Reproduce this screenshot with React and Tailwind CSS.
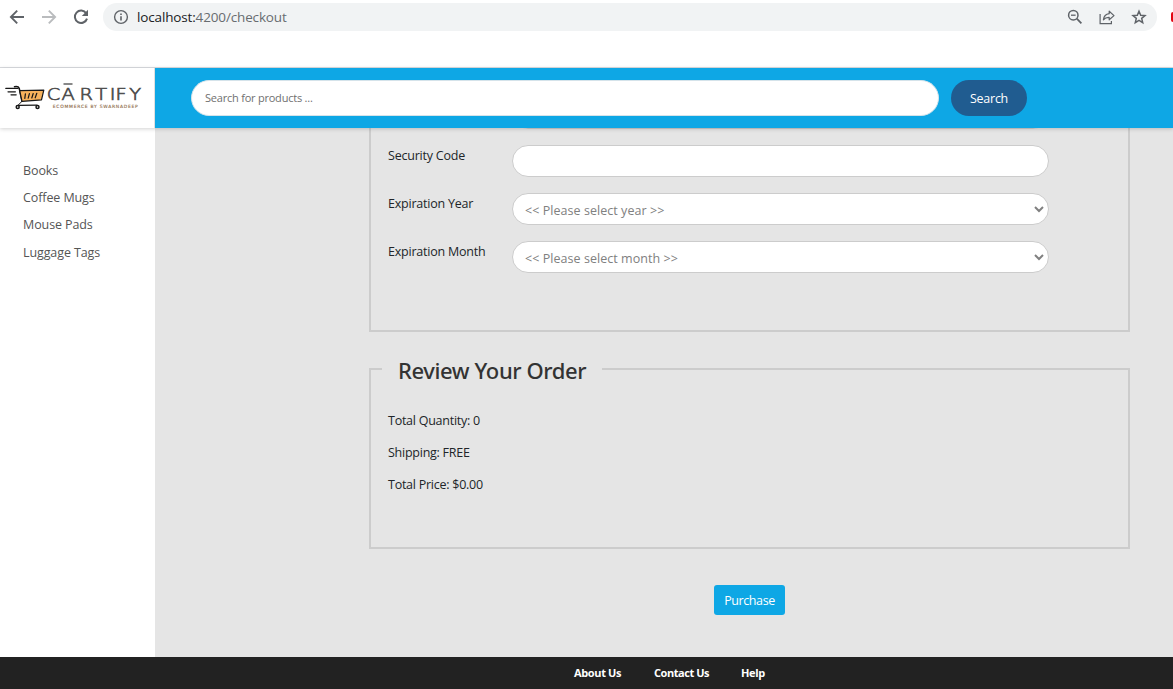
import React from 'react';

const categories = ['Books', 'Coffee Mugs', 'Mouse Pads', 'Luggage Tags'];

function BackIcon({ className }) {
  return (
    <svg className={className} width="16" height="16" viewBox="0 0 16 16" fill="none" stroke="currentColor" strokeWidth="1.9">
      <path d="M15 8H2.2M8.2 1.7 1.9 8l6.3 6.3" />
    </svg>
  );
}

function BrowserBar() {
  return (
    <div className="h-[68px] border-b border-[#dadce0] bg-white">
      <div className="flex h-[34px] items-center">
        <BackIcon className="ml-[9px] text-[#5f6368]" />
        <BackIcon className="ml-4 rotate-180 text-[#babcbe]" />
        <svg className="ml-4" width="16" height="16" viewBox="0 0 16 16" fill="none" stroke="#5f6368" strokeWidth="2">
          <path d="M13.2 4.3A6.2 6.2 0 1 0 14 9.6" />
          <path d="M15 0.8V7H8.8Z" fill="#5f6368" stroke="none" />
        </svg>
        <div className="ml-[14px] flex h-7 w-[1054px] items-center rounded-full bg-[#f1f3f4]">
          <svg className="ml-[10px]" width="16" height="16" viewBox="0 0 16 16" fill="none" stroke="#5f6368">
            <circle cx="8" cy="8" r="6.4" strokeWidth="1.4" />
            <path d="M8 7.2v4.2M8 4.4v1.6" strokeWidth="1.6" />
          </svg>
          <span className="ml-2 text-[13.5px] tracking-[-0.15px] whitespace-nowrap text-[#202124]">
            localhost:<span className="text-[#686c70]">4200/checkout</span>
          </span>
          <div className="mr-[10px] ml-auto flex items-center gap-4">
            <svg width="16" height="16" viewBox="0 0 16 16" fill="none" stroke="#5f6368" strokeWidth="1.5">
              <circle cx="6.3" cy="6.2" r="4.7" />
              <path d="M9.8 9.7 14.4 14.3" strokeWidth="1.8" />
              <path d="M4 6.2h4.6" strokeWidth="1.3" />
            </svg>
            <svg width="16" height="16" viewBox="0 0 16 16" fill="none" stroke="#5f6368" strokeWidth="1.2">
              <path d="M1.1 5V14.6H12.4V12" />
              <path d="M10.2 2.2 15 6.6 10.2 10.8V8.4C7.4 8.3 5.8 9 4.4 10.8 4.8 7.5 6.7 5.2 10.2 4.7Z" strokeLinejoin="round" />
            </svg>
            <svg width="16" height="16" viewBox="0 0 16 16" fill="none" stroke="#5f6368" strokeWidth="1.5">
              <path d="M8 2.2 9.7 6.2 14 6.6 10.7 9.4 11.7 13.7 8 11.4 4.3 13.7 5.3 9.4 2 6.6 6.3 6.2Z" />
            </svg>
          </div>
        </div>
        <div className="ml-auto h-[10px] w-[2px] rounded-l-[2px] bg-[#e30613]" />
      </div>
    </div>
  );
}

function Logo() {
  return (
    <svg width="154" height="60" viewBox="0 68 154 60" fill="none">
      <g stroke="#171717" strokeLinecap="round">
        <path d="M5.8 88.4H18M8 91.8H15.4M11 94.8H16.2" strokeWidth="1.2" />
        <path d="M14.5 86.7C17 86.2 18.6 86.6 19.2 88.3L22 101.3" strokeWidth="1.5" />
        <path d="M19.7 90.6 43.8 90.1 41.5 99.9 22 101.3Z" fill="#f7b25c" strokeWidth="1.2" strokeLinejoin="round" />
        <path d="M25.4 93.8 24.8 98.4M29.4 93.6 28.2 98.2M33.2 93.5 31.8 98M36.8 93.3 35.2 97.8" strokeWidth="1.2" />
        <path d="M22 101.3 18.5 104.8" strokeWidth="1" />
        <circle cx="17.7" cy="107" r="1.5" strokeWidth="1.5" />
        <circle cx="37.5" cy="106.9" r="1.5" strokeWidth="1.5" />
        <path d="M18.5 105.4 37 105.2" strokeWidth="1.2" />
      </g>
      <path d="M63.5 84H72.5" stroke="#555" strokeWidth="1.4" />
      <text transform="scale(1.18 1)" x="39.7 52.2 67.4 80.7 93 97.9 109.5" y="99.8" fontSize="16.4" fontFamily="DejaVu Sans" fontWeight="200" fill="#505050" stroke="#505050" strokeWidth="0.7">CARTIFY</text>
      <text x="52.8" y="108" fontSize="4.5" fontFamily="DejaVu Sans" fontWeight="400" textLength="85" fill="#8d6a48" stroke="#8d6a48" strokeWidth="0.1">ECOMMERCE BY SWARNADEEP</text>
    </svg>
  );
}

function Header() {
  return (
    <header className="relative z-10 flex h-[60px] bg-[#0ea7e5] shadow-[0_1px_4px_rgba(0,0,0,0.18)]">
      <div className="w-[155px] border-r border-[#e0e0e0] bg-white">
        <Logo />
      </div>
      <div className="flex items-center pl-9">
        <div className="flex h-9 w-[748px] items-center rounded-full border border-[#d5e3ea] bg-white pl-[13px]">
          <span className="text-[11px] tracking-[-0.22px] text-[#707070]">Search for products ...</span>
        </div>
        <button className="ml-3 h-9 w-[76px] rounded-full bg-[#205c90] pt-[2px] text-[12.5px] tracking-[-0.25px] text-white">Search</button>
      </div>
    </header>
  );
}

function Label({ children }) {
  return <label className="w-[124px] pt-px text-[12.5px] leading-5 tracking-[-0.22px] whitespace-nowrap text-[#212529]">{children}</label>;
}

function Field({ label, option }) {
  return (
    <div className="mb-4 flex h-8">
      <Label>{label}</Label>
      <div className="flex h-8 w-[537px] items-center rounded-full border border-[#ccc] bg-white pr-1 pl-3">
        {option && (
          <>
            <span className="pt-[4px] text-[12.5px] tracking-[0.05px] text-[#808080]">{option}</span>
            <svg className="ml-auto" width="10" height="8" viewBox="0 0 10 8" fill="none" stroke="#808080" strokeWidth="2">
              <path d="M1 2 5 6 9 2" />
            </svg>
          </>
        )}
      </div>
    </div>
  );
}

export default function App() {
  return (
    <div className="flex h-[689px] w-full flex-col overflow-hidden bg-white font-['Open_Sans',sans-serif]">
      <BrowserBar />
      <Header />
      <div className="flex h-[529px]">
        <aside className="w-[155px] bg-white pt-[29px] pl-[23px]">
          <nav className="flex flex-col text-[12.5px] leading-[27.2px] tracking-[-0.1px] text-[#555]">
            {categories.map((name) => <a key={name}>{name}</a>)}
          </nav>
        </aside>
        <main className="flex-1 overflow-hidden bg-[#e5e5e5] pl-[214px]">
          <form className="w-[761px]">
            <section className="-mt-[31px] h-[235px] border-x-2 border-b-2 border-[#ccc] pl-[17px]">
              <Field label="" />
              <Field label="Security Code" />
              <Field label="Expiration Year" option="<< Please select year >>" />
              <Field label="Expiration Month" option="<< Please select month >>" />
            </section>
            <fieldset className="mt-[21px] h-[196px] border-2 border-[#ccc] pl-[11px]">
              <legend className="h-[32px] w-[220px] pl-4 font-['Noto_Sans',sans-serif] text-[22px] leading-[35px] font-medium tracking-[-0.4px] whitespace-nowrap text-[#333]">Review Your Order</legend>
              <div className="flex flex-col gap-3 pt-[26px] pl-[6px] text-[12.5px] leading-5 tracking-[-0.25px] text-[#212529]">
                <p>Total Quantity: 0</p>
                <p>Shipping: FREE</p>
                <p>Total Price: $0.00</p>
              </div>
            </fieldset>
            <div className="flex justify-center pt-9">
              <button className="h-[30px] w-[71px] rounded-[3px] bg-[#0ea7e5] pt-[2px] text-[12.5px] tracking-[-0.4px] text-white">Purchase</button>
            </div>
          </form>
        </main>
      </div>
      <footer className="flex h-8 items-center bg-[#222] pl-[574px] text-[11px] font-bold tracking-[-0.35px] whitespace-nowrap text-white">
        <a className="w-20">About Us</a>
        <a className="w-[87px] tracking-[-0.45px]">Contact Us</a>
        <a>Help</a>
      </footer>
    </div>
  );
}
